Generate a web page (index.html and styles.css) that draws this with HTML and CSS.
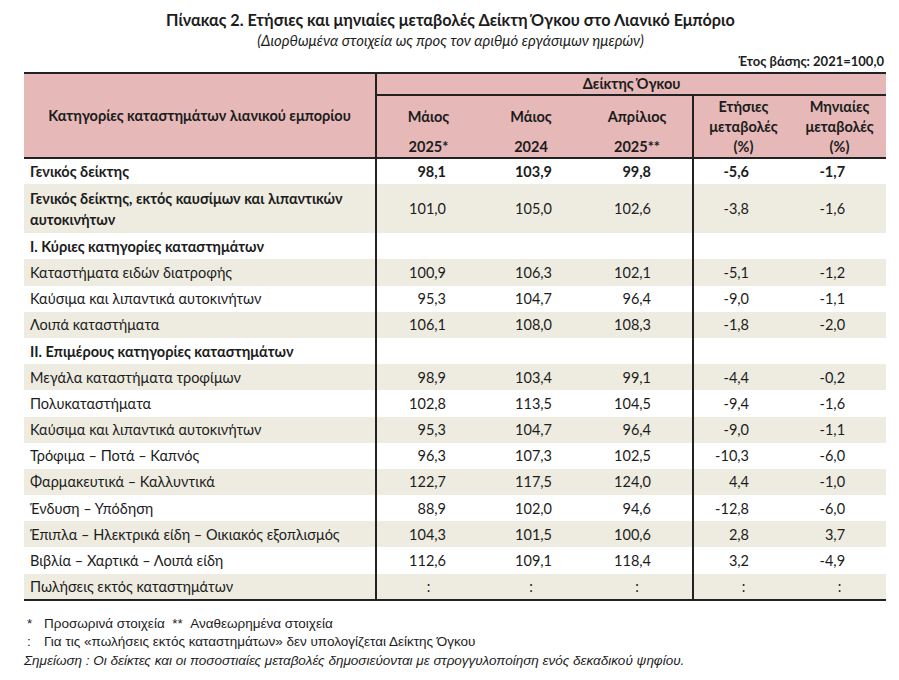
FILE: index.html
```html
<!DOCTYPE html>
<html lang="el">
<head>
  <meta charset="UTF-8" />
  <title>Πίνακας 2. Δείκτης Όγκου στο Λιανικό Εμπόριο</title>
  <link rel="stylesheet" href="styles.css">
</head>
<body>
  <div class="page">
    <div class="title">Πίνακας 2. Ετήσιες και μηνιαίες μεταβολές Δείκτη Όγκου στο Λιανικό Εμπόριο</div>
    <div class="subtitle">(Διορθωμένα στοιχεία ως προς τον αριθμό εργάσιμων ημερών)</div>
    <div class="base">Έτος βάσης: 2021=100,0</div>

    <table class="data">
      <colgroup>
        <col class="c-cat"><col class="c1"><col class="c2"><col class="c3"><col class="c4"><col class="c5">
      </colgroup>
      <thead>
        <tr class="h1">
          <th rowspan="2" class="cat-head sep">Κατηγορίες καταστημάτων λιανικού εμπορίου</th>
          <th colspan="5" class="group">Δείκτης Όγκου</th>
        </tr>
        <tr class="h2">
          <th><div>Μάιος</div><div>2025*</div></th>
          <th><div>Μάιος</div><div>2024</div></th>
          <th class="sep"><div>Απρίλιος</div><div>2025**</div></th>
          <th class="pct">Ετήσιες<br>μεταβολές<br>(%)</th>
          <th class="pct">Μηνιαίες<br>μεταβολές<br>(%)</th>
        </tr>
      </thead>
      <tbody>
        <tr class="bold"><td class="sep">Γενικός δείκτης</td><td>98,1</td><td>103,9</td><td class="sep">99,8</td><td>-5,6</td><td>-1,7</td></tr>
        <tr class="alt two"><td class="sep bold-cell">Γενικός δείκτης, εκτός καυσίμων και λιπαντικών αυτοκινήτων</td><td>101,0</td><td>105,0</td><td class="sep">102,6</td><td>-3,8</td><td>-1,6</td></tr>
        <tr><td class="sep bold-cell">I. Κύριες κατηγορίες καταστημάτων</td><td></td><td></td><td class="sep"></td><td></td><td></td></tr>
        <tr class="alt"><td class="sep">Καταστήματα ειδών διατροφής</td><td>100,9</td><td>106,3</td><td class="sep">102,1</td><td>-5,1</td><td>-1,2</td></tr>
        <tr><td class="sep">Καύσιμα και λιπαντικά αυτοκινήτων</td><td>95,3</td><td>104,7</td><td class="sep">96,4</td><td>-9,0</td><td>-1,1</td></tr>
        <tr class="alt"><td class="sep">Λοιπά καταστήματα</td><td>106,1</td><td>108,0</td><td class="sep">108,3</td><td>-1,8</td><td>-2,0</td></tr>
        <tr><td class="sep bold-cell">II. Επιμέρους κατηγορίες καταστημάτων</td><td></td><td></td><td class="sep"></td><td></td><td></td></tr>
        <tr class="alt"><td class="sep">Μεγάλα καταστήματα τροφίμων</td><td>98,9</td><td>103,4</td><td class="sep">99,1</td><td>-4,4</td><td>-0,2</td></tr>
        <tr><td class="sep">Πολυκαταστήματα</td><td>102,8</td><td>113,5</td><td class="sep">104,5</td><td>-9,4</td><td>-1,6</td></tr>
        <tr class="alt"><td class="sep">Καύσιμα και λιπαντικά αυτοκινήτων</td><td>95,3</td><td>104,7</td><td class="sep">96,4</td><td>-9,0</td><td>-1,1</td></tr>
        <tr><td class="sep">Τρόφιμα – Ποτά – Καπνός</td><td>96,3</td><td>107,3</td><td class="sep">102,5</td><td>-10,3</td><td>-6,0</td></tr>
        <tr class="alt"><td class="sep">Φαρμακευτικά – Καλλυντικά</td><td>122,7</td><td>117,5</td><td class="sep">124,0</td><td>4,4</td><td>-1,0</td></tr>
        <tr><td class="sep">Ένδυση – Υπόδηση</td><td>88,9</td><td>102,0</td><td class="sep">94,6</td><td>-12,8</td><td>-6,0</td></tr>
        <tr class="alt"><td class="sep">Έπιπλα – Ηλεκτρικά είδη – Οικιακός εξοπλισμός</td><td>104,3</td><td>101,5</td><td class="sep">100,6</td><td>2,8</td><td>3,7</td></tr>
        <tr><td class="sep">Βιβλία – Χαρτικά – Λοιπά είδη</td><td>112,6</td><td>109,1</td><td class="sep">118,4</td><td>3,2</td><td>-4,9</td></tr>
        <tr class="alt colon"><td class="sep">Πωλήσεις εκτός καταστημάτων</td><td>:</td><td>:</td><td class="sep">:</td><td>:</td><td>:</td></tr>
      </tbody>
    </table>

    <div class="notes">
      <div class="note"><span class="mark">*</span>Προσωρινά στοιχεία&nbsp;&nbsp;**&nbsp;&nbsp;Αναθεωρημένα στοιχεία</div>
      <div class="note"><span class="mark">:</span>Για τις «πωλήσεις εκτός καταστημάτων» δεν υπολογίζεται Δείκτης Όγκου</div>
      <div class="note remark">Σημείωση : Οι δείκτες και οι ποσοστιαίες μεταβολές δημοσιεύονται με στρογγυλοποίηση ενός δεκαδικού ψηφίου.</div>
    </div>
  </div>
</body>
</html>
```

FILE: styles.css
```css
* {
  box-sizing: border-box;
}
html, body {
  margin: 0;
  padding: 0;
  background: #fff;
}
body {
  font-family: Lato, "Open Sans", "Noto Sans", sans-serif;
  color: #1c1c1c;
}
.page {
  width: 899px;
  padding: 9px 0 0 24px;
}
/* Τίτλοι πάνω από τον πίνακα */
.title {
  width: 853px;
  text-align: center;
  font-weight: bold;
  font-size: 16.2px;
  line-height: 21px;
}
.subtitle {
  width: 853px;
  text-align: center;
  font-style: italic;
  font-size: 14.9px;
  line-height: 21px;
}
.base {
  width: 860px;
  text-align: right;
  font-weight: bold;
  font-size: 13px;
  line-height: 21px;
}
/* Πίνακας */
.data {
  width: 862px;
  border-collapse: collapse;
  table-layout: fixed;
  font-size: 14.5px;
  border-top: 2px solid #222;
  border-bottom: 2px solid #222;
}
.c-cat { width: 352px; }
.c1 { width: 104px; }
.c2 { width: 102px; }
.c3 { width: 111px; }
.c4 { width: 100px; }
.c5 { width: 93px; }

.data th {
  background: #e6b9b8;
  font-weight: bold;
  text-align: center;
  padding: 0;
}
.data .h1 th.group {
  height: 22px;
  line-height: 20px;
  border-bottom: 2px solid #222;
}
.data .h2 th {
  height: 61px;
  vertical-align: top;
  border-bottom: 2px solid #222;
}
.data .h2 th div {
  line-height: 20px;
}
.data .h2 th div:first-child {
  padding-top: 11px;
}
.data .h2 th div + div {
  margin-top: 10px;
}
.data .h2 th.pct {
  line-height: 20px;
  padding-top: 1px;
}
.data .cat-head {
  border-bottom: 2px solid #222;
}
.sep {
  border-right: 2px solid #222;
}
.data td {
  height: 26.2px;
  line-height: 21px;
  padding: 0;
  text-align: right;
}
.data td:first-child {
  text-align: left;
  padding-left: 6px;
}
.data td:nth-child(2) { padding-right: 34px; }
.data td:nth-child(3) { padding-right: 30px; }
.data td:nth-child(4) { padding-right: 41px; }
.data td:nth-child(5) { padding-right: 44px; }
.data td:nth-child(6) { padding-right: 41px; }
.data tr.alt td {
  background: #eeece1;
}
.data tr.two td {
  height: 49px;
}
.data tr.colon td {
  text-align: center;
  padding-right: 0;
}
.data tr.colon td:first-child {
  text-align: left;
}
.bold td, .bold-cell {
  font-weight: bold;
}
/* Σημειώσεις κάτω από τον πίνακα */
.notes {
  padding-top: 14px;
  font-family: "Liberation Sans Narrow", "Liberation Sans", Arial, sans-serif;
  font-size: 13.5px;
  line-height: 18.5px;
}
.note .mark {
  display: inline-block;
  width: 20px;
  padding-left: 3px;
}
.remark {
  font-style: italic;
}
```
